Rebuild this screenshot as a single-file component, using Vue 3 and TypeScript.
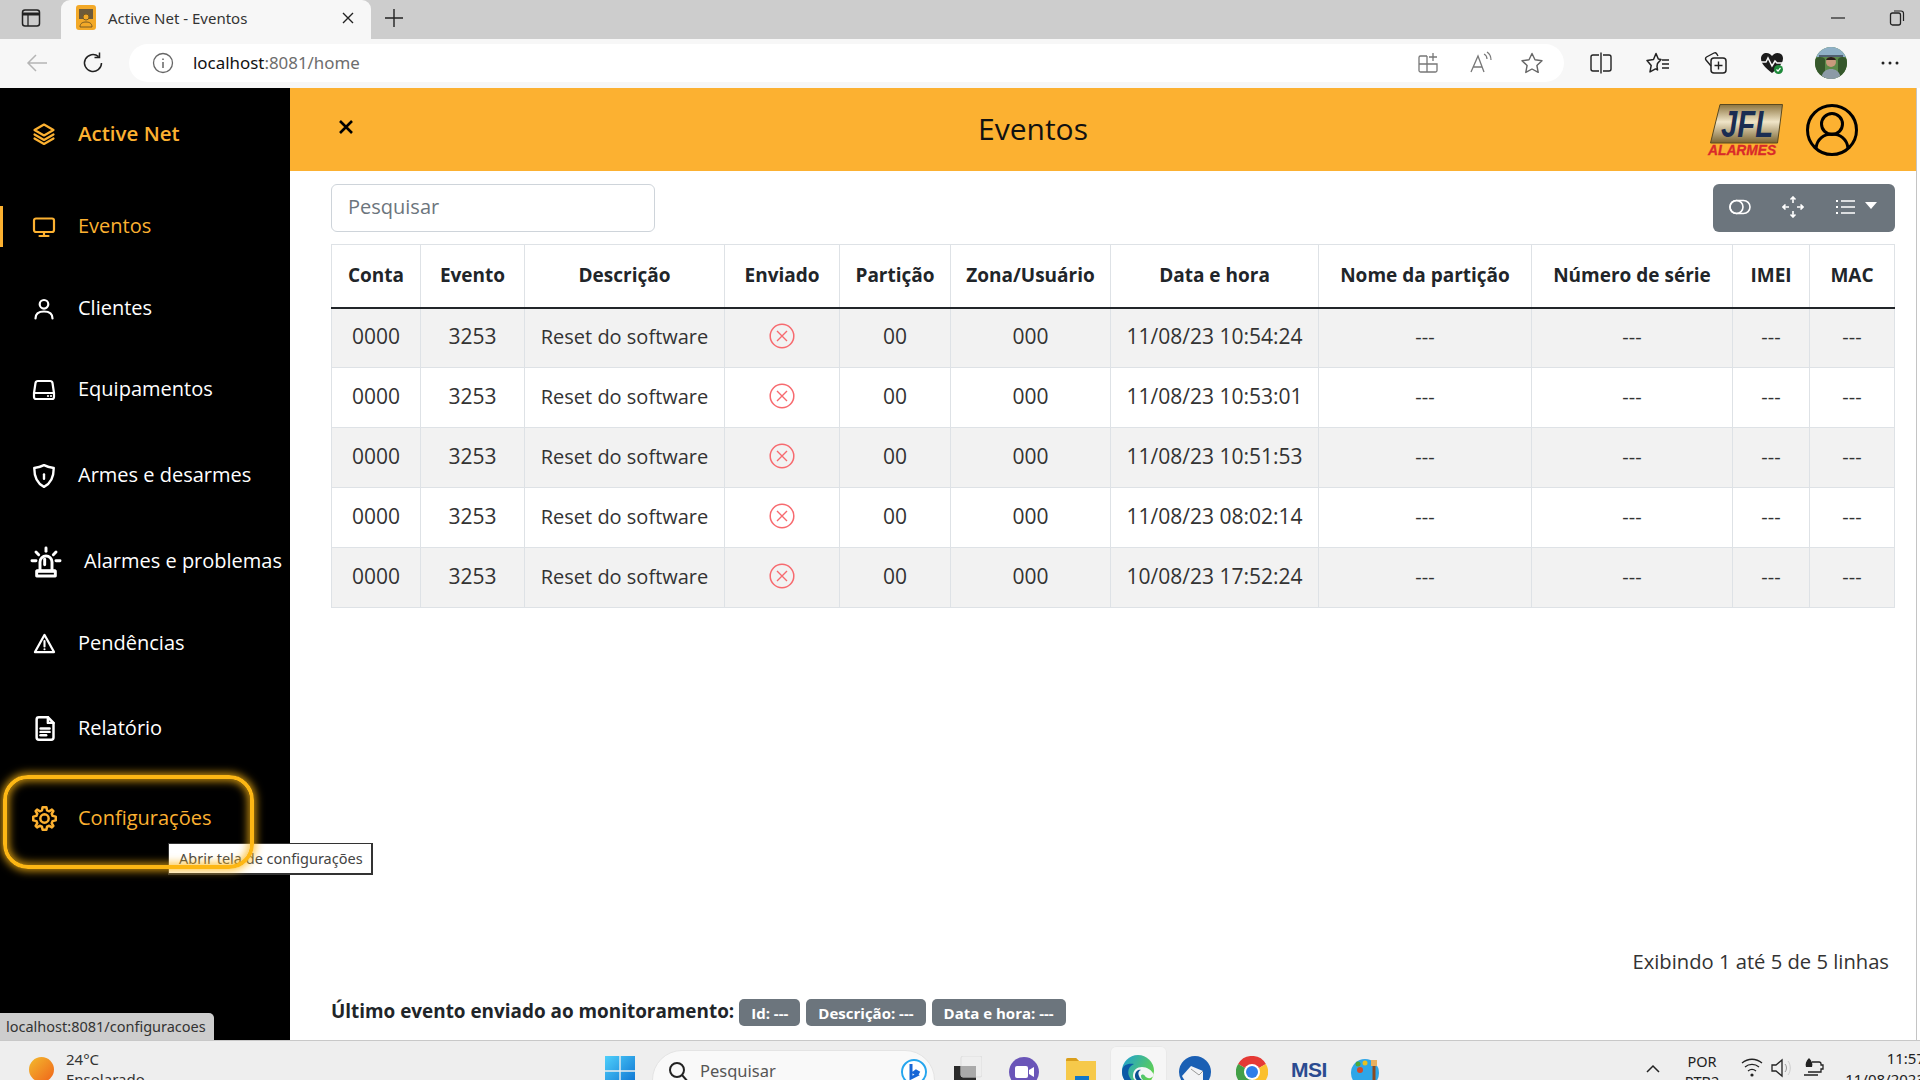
<script setup lang="ts">
interface MenuItem { label: string; paths: string[]; size: number; active?: boolean; cls: string }
const menu: MenuItem[] = [
  { label: 'Eventos', cls: 'm-eventos', size: 24, active: true, paths: ['M4 3.5h16a2 2 0 0 1 2 2V15a2 2 0 0 1-2 2H4a2 2 0 0 1-2-2V5.500a2 2 0 0 1 2-2z', 'M12 17v4', 'M7.500 21h9'] },
  { label: 'Clientes', cls: 'm-clientes', size: 24, paths: ['M12 3a4.300 4.300 0 1 0 0 8.600a4.300 4.300 0 0 0 0-8.600z', 'M3.500 21.500c0-5 3.800-7 8.500-7s8.500 2 8.500 7'] },
  { label: 'Equipamentos', cls: 'm-equip', size: 24, paths: ['M6 3h12a2.500 2.500 0 0 1 2.500 2l1.500 10v4a2 2 0 0 1-2 2H4a2 2 0 0 1-2-2v-4L3.500 5A2.500 2.500 0 0 1 6 3z', 'M2 15h20', 'M16 18h.01', 'M19 18h.01'] },
  { label: 'Armes e desarmes', cls: 'm-armes', size: 26, paths: ['M12 2c3 1.600 6 2.400 9 2.600 0 8-2 14-9 17.400-7-3.400-9-9.400-9-17.400C6 4.400 9 3.600 12 2z', 'M12 10.500v.01', 'M12 11v3.500'] },
  { label: 'Alarmes e problemas', cls: 'm-alarmes', size: 32, paths: ['M7.500 18v-6a4.500 4.500 0 0 1 9 0v6', 'M5.500 18.500h13', 'M5 19h14v3.500H5z', 'M12 1.500v2.500', 'M4.500 4.500l2 2', 'M19.500 4.500l-2 2', 'M1.500 11h3', 'M19.500 11h3', 'M11 10v4'] },
  { label: 'Pendências', cls: 'm-pend', size: 23, paths: ['M12 3L22 21H2z', 'M12 9.500v5.500', 'M12 18v.01'] },
  { label: 'Relatório', cls: 'm-rel', size: 27, paths: ['M7 2h8l5 5v13a2 2 0 0 1-2 2H7a2 2 0 0 1-2-2V4a2 2 0 0 1 2-2z', 'M15 2v5h5', 'M8.500 12h8', 'M8.500 15h8', 'M8.500 18h5'] },
  { label: 'Configurações', cls: 'm-config', size: 27, active: true, paths: ['M10.300 2H13.700L14.300 4.800L16.200 5.600L18.600 4.100L19.900 5.400L18.400 7.800L19.200 9.700L22 10.300V13.700L19.200 14.300L18.400 16.200L19.900 18.600L18.600 19.900L16.200 18.400L14.300 19.200L13.700 22H10.300L9.700 19.200L7.800 18.400L5.400 19.900L4.100 18.600L5.600 16.200L4.800 14.300L2 13.700V10.300L4.800 9.700L5.600 7.800L4.100 5.400L5.400 4.100L7.800 5.600L9.700 4.800z', 'M12 8.300a3.700 3.700 0 1 0 0 7.400a3.700 3.700 0 0 0 0-7.400z'] },
]
const columns: { title: string; width: number }[] = [
  { title: 'Conta', width: 89 }, { title: 'Evento', width: 104 }, { title: 'Descrição', width: 200 },
  { title: 'Enviado', width: 115 }, { title: 'Partição', width: 111 }, { title: 'Zona/Usuário', width: 160 },
  { title: 'Data e hora', width: 208 }, { title: 'Nome da partição', width: 213 }, { title: 'Número de série', width: 201 },
  { title: 'IMEI', width: 77 }, { title: 'MAC', width: 85 },
]
const dates = ['11/08/23 10:54:24', '11/08/23 10:53:01', '11/08/23 10:51:53', '11/08/23 08:02:14', '10/08/23 17:52:24']
</script>

<template>
  <div class="screen">
    <div class="tabstrip">
      <svg class="strip-ic" width="20" height="20" viewBox="0 0 20 20"><rect x="1.500" y="2" width="17" height="16" rx="2.500" fill="none" stroke="#222" stroke-width="1.500"/><path d="M2 6h16" stroke="#222" stroke-width="3"/><path d="M7 6v12" stroke="#222" stroke-width="1.300"/></svg>
      <div class="tab">
        <svg class="favicon" width="20" height="25" viewBox="0 0 20 25"><rect width="20" height="25" rx="3" fill="#f3a928"/><rect x="3" y="4" width="14" height="10" fill="#6d5a3a"/><circle cx="10" cy="12" r="3" fill="#f3a928" stroke="#7a5a20"/><path d="M4 22c0-4 3-5 6-5s6 1 6 5z" fill="none" stroke="#7a5a20"/></svg>
        <span class="tab-title">Active Net - Eventos</span>
        <svg width="14" height="14" viewBox="0 0 14 14" class="tab-x"><path d="M2 2l10 10M12 2L2 12" stroke="#222" stroke-width="1.400"/></svg>
      </div>
      <svg class="plus" width="20" height="20" viewBox="0 0 20 20"><path d="M10 1v18M1 10h18" stroke="#222" stroke-width="1.400"/></svg>
      <div class="winctl">
        <svg width="16" height="16" viewBox="0 0 16 16"><path d="M1 8h14" stroke="#222" stroke-width="1.200"/></svg>
        <svg width="16" height="18" viewBox="0 0 16 18"><rect x="1.500" y="4" width="10" height="12" rx="2" fill="none" stroke="#222" stroke-width="1.300"/><path d="M5 2h7a2.500 2.500 0 0 1 2.500 2.500V12" fill="none" stroke="#222" stroke-width="1.200"/></svg>
      </div>
    </div>

    <div class="toolbar">
      <span class="tb-btn first"><svg width="24" height="24" viewBox="0 0 24 24"><path d="M22 12H3M11 4l-8 8 8 8" fill="none" stroke="#b5b5b5" stroke-width="1.500"/></svg></span>
      <span class="tb-btn"><svg width="24" height="24" viewBox="0 0 24 24"><path d="M19.500 12a8.500 8.500 0 1 1-3-6.500M17.500 1.500v5h-5" fill="none" stroke="#222" stroke-width="1.500"/></svg></span>
      <div class="address">
        <svg width="22" height="22" viewBox="0 0 22 22"><circle cx="11" cy="11" r="9.500" fill="none" stroke="#666" stroke-width="1.300"/><path d="M11 10v6M11 6.500v1.600" stroke="#666" stroke-width="1.500"/></svg>
        <span class="url">localhost<span class="url-rest">:8081/home</span></span>
        <div class="addr-icons">
          <svg width="22" height="22" viewBox="0 0 22 22"><path d="M10 4H3.500A1.500 1.500 0 0 0 2 5.500v13A1.500 1.500 0 0 0 3.500 20h15a1.500 1.500 0 0 0 1.500-1.500V12H2M10 4v16" fill="none" stroke="#777" stroke-width="1.300"/><path d="M16 1v8M12 5h8" stroke="#777" stroke-width="1.300"/></svg>
          <svg width="24" height="24" viewBox="0 0 24 24"><path d="M2 21L9 5l6 16M4.500 16h9" fill="none" stroke="#777" stroke-width="1.300"/><path d="M15 3c2 1 3 3 3 5M18 1c3 2 4 5 4 8" fill="none" stroke="#777" stroke-width="1.200"/></svg>
          <svg width="24" height="24" viewBox="0 0 24 24"><path d="M12 2.500l3 6.300 7 .9-5.100 4.800 1.300 6.900-6.200-3.400-6.200 3.400 1.300-6.900L2 9.700l7-.9z" fill="none" stroke="#666" stroke-width="1.400" stroke-linejoin="round"/></svg>
        </div>
      </div>
      <div class="tb-right">
        <span class="tb-btn"><svg width="24" height="24" viewBox="0 0 24 24"><path d="M10 4H4a2 2 0 0 0-2 2v12a2 2 0 0 0 2 2h6M14 4h6a2 2 0 0 1 2 2v12a2 2 0 0 1-2 2h-6M12 1.500v21" fill="none" stroke="#222" stroke-width="1.400"/></svg></span>
        <span class="tb-btn"><svg width="24" height="24" viewBox="0 0 24 24"><path d="M10 2.500l2.300 5.500 2.700.4-3.500 4-.5 3 .5 3.500-2-1-5.500 3 1.200-6.500L1 9.500l6.500-1z" fill="none" stroke="#222" stroke-width="1.500" stroke-linejoin="round"/><path d="M16 9h7M16 13h7M16 17h7" stroke="#222" stroke-width="1.300"/></svg></span>
        <span class="tb-btn"><svg width="24" height="24" viewBox="0 0 24 24"><path d="M8 15L3 9a2 2 0 0 1 .5-3L11 2a2 2 0 0 1 2.600.6L15 5" fill="none" stroke="#222" stroke-width="1.400"/><rect x="8" y="7" width="15" height="15" rx="3" fill="none" stroke="#222" stroke-width="1.500"/><path d="M15.500 10.500v8M11.500 14.500h8" stroke="#222" stroke-width="1.400"/></svg></span>
        <span class="tb-btn"><svg width="24" height="24" viewBox="0 0 24 24"><path d="M12 22C6 17 1 13 1 7.500 1 4 3.500 2 6.500 2 9 2 11 3.500 12 5c1-1.500 3-3 5.500-3C20.500 2 23 4 23 7.500 23 13 18 17 12 22z" fill="#1c1c1c"/><path d="M0 11h6l2-4 4 8 3-5 2 2h7" fill="none" stroke="#f7f7f7" stroke-width="1.500"/><circle cx="18.500" cy="18.500" r="4.500" fill="#1f8a3b"/><path d="M16.500 18.500l1.500 1.500 2.500-3" fill="none" stroke="#fff" stroke-width="1.200"/></svg></span>
        <span class="tb-btn avatar-btn"><svg width="32" height="32" viewBox="0 0 32 32"><defs><clipPath id="avc"><circle cx="16" cy="16" r="16"/></clipPath></defs><g clip-path="url(#avc)"><rect width="32" height="32" fill="#5c8a4a"/><rect width="32" height="10" fill="#8fb0c6"/><path d="M4 9h24" stroke="#506070" stroke-width="2"/><path d="M0 12c4-3 8-2 10 0v20H0zM32 12c-4-3-7-2-9 0v20h9z" fill="#36582c"/><circle cx="16" cy="15" r="5" fill="#c99a7d"/><path d="M11 13c1-4 9-4 10 0z" fill="#2a1e18"/><path d="M6 32c1-8 6-10 10-10s9 2 10 10z" fill="#8c9aa6"/></g></svg></span>
        <span class="tb-btn dots-btn"><svg width="20" height="6" viewBox="0 0 20 6"><circle cx="3" cy="3" r="1.500" fill="#222"/><circle cx="10" cy="3" r="1.500" fill="#222"/><circle cx="17" cy="3" r="1.500" fill="#222"/></svg></span>
      </div>
    </div>

    <div class="main">
      <aside class="sidebar">
        <div class="brand">
          <svg width="24" height="24" viewBox="0 0 24 24" class="icon"><path d="M12 2.500L21.500 8 12 13.500 2.500 8z" /><path d="M2.500 12.500L12 18l9.500-5.500" /><path d="M2.500 16.500L12 22l9.500-5.500" /></svg>
          <span>Active Net</span>
        </div>
        <nav class="menu">
          <a v-for="item in menu" :key="item.label" class="item" :class="[item.cls, { active: item.active }]">
            <span class="ic-box">
              <svg :width="item.size" :height="item.size" viewBox="0 0 24 24" class="icon"><path v-for="d in item.paths" :key="d" :d="d"/></svg>
            </span>
            <span class="label">{{ item.label }}</span>
          </a>
        </nav>
      </aside>

      <section class="content">
        <header class="topbar">
          <svg class="close" width="16" height="16" viewBox="0 0 16 16"><path d="M2 2l12 12M14 2L2 14" stroke="#000" stroke-width="2.600"/></svg>
          <h1>Eventos</h1>
          <svg class="logo" width="76" height="52" viewBox="0 0 76 52">
            <defs><linearGradient id="gold" x1="0" y1="0" x2="0" y2="1"><stop offset="0" stop-color="#8c7440"/><stop offset=".45" stop-color="#f0e5c8"/><stop offset="1" stop-color="#7b6533"/></linearGradient></defs>
            <path d="M13 .5H75.500L70.500 39H3.500z" fill="url(#gold)" stroke="#5b4a20"/>
            <text x="14" y="33" textLength="52" lengthAdjust="spacingAndGlyphs" class="jfl">JFL</text>
            <text x="1" y="51" class="alarmes">ALARMES</text>
          </svg>
          <svg class="avatar" width="52" height="52" viewBox="0 0 52 52"><circle cx="26" cy="26" r="24.500" fill="none" stroke="#000" stroke-width="3"/><circle cx="26" cy="20" r="10.500" fill="none" stroke="#000" stroke-width="3"/><path d="M10 44c1-9 8-14 16-14s15 5 16 14" fill="none" stroke="#000" stroke-width="3"/></svg>
        </header>

        <div class="body">
          <div class="tools">
            <div class="search">Pesquisar</div>
            <div class="btn-group">
              <svg width="22" height="16" viewBox="0 0 22 16"><rect x="1" y="1.500" width="20" height="13" rx="6.500" fill="none" stroke="#fff" stroke-width="1.600"/><circle cx="7.500" cy="8" r="6.500" fill="none" stroke="#fff" stroke-width="1.600"/></svg>
              <svg width="22" height="22" viewBox="0 0 22 22"><path d="M11 1v6M11 15v6M1 11h6M15 11h6M8.500 3.500L11 1l2.500 2.500M8.500 18.500L11 21l2.500-2.500M3.500 8.500L1 11l2.500 2.500M18.500 8.500L21 11l-2.500 2.500" fill="none" stroke="#fff" stroke-width="1.600"/></svg>
              <span class="list-btn">
                <svg width="20" height="16" viewBox="0 0 20 16"><path d="M6 2h14M6 8h14M6 14h14" stroke="#fff" stroke-width="1.500"/><path d="M1 2h2M1 8h2M1 14h2" stroke="#fff" stroke-width="2.200"/></svg>
                <i class="caret"></i>
              </span>
            </div>
          </div>

          <table class="grid">
            <colgroup><col v-for="c in columns" :key="c.title" :style="{ width: c.width + 'px' }"></colgroup>
            <thead><tr><th v-for="c in columns" :key="c.title">{{ c.title }}</th></tr></thead>
            <tbody>
              <tr v-for="d in dates" :key="d">
                <td class="num">0000</td>
                <td class="num">3253</td>
                <td>Reset do software</td>
                <td><svg class="x-ic" width="26" height="26" viewBox="0 0 26 26"><circle cx="13" cy="13" r="11.800" fill="none" stroke="#f76a6f" stroke-width="1.500"/><path d="M8 8l10 10M18 8L8 18" stroke="#f76a6f" stroke-width="1.400"/></svg></td>
                <td class="num">00</td>
                <td class="num">000</td>
                <td class="num">{{ d }}</td>
                <td>---</td>
                <td>---</td>
                <td>---</td>
                <td>---</td>
              </tr>
            </tbody>
          </table>

          <div class="pagination">Exibindo 1 até 5 de 5 linhas</div>
          <div class="last-event">
            <strong>Último evento enviado ao monitoramento:</strong>
            <span class="badge">Id: ---</span>
            <span class="badge">Descrição: ---</span>
            <span class="badge">Data e hora: ---</span>
          </div>
        </div>
      </section>
      <div class="edge"></div>
    </div>

    <div class="taskbar">
      <div class="weather">
        <span class="sun"></span>
        <div class="w-text"><div>24°C</div><div>Ensolarado</div></div>
      </div>
      <svg class="start" width="30" height="30" viewBox="0 0 30 30"><defs><linearGradient id="win" x1="0" y1="0" x2="1" y2="1"><stop offset="0" stop-color="#4fd0fb"/><stop offset="1" stop-color="#0a6fd0"/></linearGradient></defs><path d="M0 0h14.300v14.300H0zM15.700 0H30v14.300H15.700zM0 15.700h14.300V30H0zM15.700 15.700H30V30H15.700z" fill="url(#win)"/></svg>
      <div class="tb-search">
        <svg width="22" height="24" viewBox="0 0 22 24"><circle cx="9" cy="10" r="7" fill="none" stroke="#222" stroke-width="2"/><path d="M14 15l7 8" stroke="#222" stroke-width="2"/></svg>
        <span>Pesquisar</span>
        <svg class="bing" width="26" height="30" viewBox="0 0 26 30"><circle cx="13" cy="13" r="12" fill="#fff" stroke="#25a5ee" stroke-width="2"/><path d="M10 5v14l6-3-3-2.500 2-1.500 3.500 2" fill="none" stroke="#1766d6" stroke-width="3"/></svg>
      </div>
      <div class="apps">
        <span class="app"><svg width="30" height="30" viewBox="0 0 30 30"><rect x="2" y="10" width="22" height="20" fill="#2a2a2a"/><rect x="9" y="0" width="21" height="21" rx="2" fill="#eee" stroke="#ddd"/><rect x="9" y="10" width="15" height="11" fill="#aaa"/></svg></span>
        <span class="app"><svg width="30" height="30" viewBox="0 0 30 30"><circle cx="15" cy="16" r="15" fill="#6a55b8"/><rect x="6" y="10" width="13" height="12" rx="2" fill="#fff"/><path d="M20 14l5-3v10l-5-3z" fill="#fff"/></svg></span>
        <span class="app"><svg width="32" height="30" viewBox="0 0 32 30"><path d="M1 4a2 2 0 0 1 2-2h8l3 3h17v25H1z" fill="#f6c94a"/><path d="M1 4a2 2 0 0 1 2-2h8l3 3H1z" fill="#d99e1c"/><rect x="10" y="20" width="14" height="10" fill="#1176c9"/></svg></span>
        <span class="app active"><svg width="32" height="32" viewBox="0 0 32 32"><defs><linearGradient id="edge" x1="0" y1="0" x2="1" y2=".6"><stop offset="0" stop-color="#1d9fd8"/><stop offset="1" stop-color="#62d24c"/></linearGradient></defs><circle cx="16" cy="16" r="16" fill="url(#edge)"/><path d="M0 17C0 9 7 8 12 9c-5 2-7 7-5 12 2 5 7 8 13 9-1 1-3 2-5 2C7 32 0 25 0 17z" fill="#0c5aa6"/><path d="M11 21c0-6 4-9 9-9s10 3 12 8c-2 4-7 4-9 1-1-2-4-2-4 0 0 3 3 5 6 6-6 2-14-1-14-6z" fill="#f4f6f6"/><path d="M13 21c0-4 3-7 6-6-3 1-3 4-2 6 1 3 4 5 7 6-5 1-11-1-11-6z" fill="#0a4f92"/></svg></span>
        <span class="app"><svg width="32" height="32" viewBox="0 0 32 32"><circle cx="16" cy="16" r="16" fill="#1a5fb4"/><path d="M3 20l9-10 12 5v9l-9 6c-5-1-10-5-12-10z" fill="#f2f2f5"/><path d="M12 13l8 6 4-4" fill="none" stroke="#999"/></svg></span>
        <span class="app"><svg width="32" height="32" viewBox="0 0 32 32"><path d="M16 16L29.900 8A16 16 0 0 0 2.100 8z" fill="#e53935"/><path d="M16 16L2.100 8A16 16 0 0 0 16 32z" fill="#43a047"/><path d="M16 16V32A16 16 0 0 0 29.900 8z" fill="#fbc02d"/><circle cx="16" cy="16" r="8" fill="#fff"/><circle cx="16" cy="16" r="6" fill="#2f7ee8"/></svg></span>
        <span class="app msi">MSI</span>
        <span class="app"><svg width="30" height="32" viewBox="0 0 30 32"><circle cx="14" cy="17" r="14" fill="#2ea6e8"/><circle cx="9" cy="14" r="3" fill="#d34a28"/><circle cx="14" cy="7" r="2.500" fill="#e8c020"/><circle cx="7" cy="8" r="2.500" fill="#4aa83c"/><rect x="20" y="4" width="6" height="6" fill="#e8b060"/><rect x="21.500" y="10" width="3" height="22" fill="#8a4a20"/></svg></span>
      </div>
      <div class="tray">
        <svg class="tray-caret" width="16" height="10" viewBox="0 0 16 10"><path d="M2 8l6-6 6 6" fill="none" stroke="#222" stroke-width="1.500"/></svg>
        <div class="lang"><div>POR</div><div>PTB2</div></div>
        <svg class="wifi" width="24" height="22" viewBox="0 0 24 22"><path d="M2 7c6-5 14-5 20 0M5 11c4-3.500 10-3.500 14 0M8 15c2.500-2 5.500-2 8 0" fill="none" stroke="#222" stroke-width="1.300"/><circle cx="12" cy="19" r="1.600" fill="#222"/></svg>
        <svg class="sound" width="22" height="24" viewBox="0 0 22 24"><path d="M2 9v6h4l6 5V4L6 9z" fill="none" stroke="#222" stroke-width="1.300"/><path d="M15 8c2 2 2 6 0 8" fill="none" stroke="#999"/><path d="M18 5c3 4 3 10 0 14" fill="none" stroke="#ccc"/></svg>
        <svg class="batt" width="22" height="24" viewBox="0 0 22 24"><path d="M7 3c-3 3-4 6-3 9h6c1-3 0-6-3-9z" fill="#222"/><path d="M10 7h7a2 2 0 0 1 2 2v1h2v4h-2v3H6M2 20h14" fill="none" stroke="#222" stroke-width="1.300"/></svg>
        <div class="clock"><div>11:57</div><div>11/08/2023</div></div>
      </div>
    </div>

    <div class="status">localhost:8081/configuracoes</div>
    <div class="tooltip">Abrir tela de configurações</div>
    <div class="glow"></div>
  </div>
</template>

<style>
html, body { margin: 0; background: #fff; overflow: hidden; }
</style>

<style scoped>
.screen { position: relative; width: 1920px; height: 1080px; overflow: hidden; display: flex; flex-direction: column; font-family: "Open Sans", "Noto Sans", sans-serif; color: #212529; background: #fff; }

.tabstrip { height: 39px; flex-shrink: 0; background: #cdcdcd; display: flex; align-items: flex-start; box-sizing: border-box; }
.strip-ic { margin: 8px 0 0 21px; }
.tab { margin-left: 20px; width: 310px; height: 39px; box-sizing: border-box; background: #f7f7f7; border-radius: 9px 9px 0 0; display: flex; align-items: center; padding: 0 16px 4px 15px; }
.tab-title { margin-left: 12px; flex: 1; font-family: "Noto Sans", sans-serif; font-size: 15px; color: #333; }
.plus { margin: 8px 0 0 13px; }
.winctl { margin: 9px 0 0 auto; display: flex; align-items: center; gap: 43px; padding-right: 15px; }

.toolbar { height: 49px; flex-shrink: 0; background: #f7f7f7; display: flex; align-items: center; box-sizing: border-box; padding-bottom: 2px; }
.tb-btn { width: 57px; height: 47px; display: flex; align-items: center; justify-content: center; flex-shrink: 0; }
.tb-btn.first { margin-left: 8px; }
.avatar-btn { margin-left: 2px; }
.dots-btn { margin-left: 2px; }
.address { margin-left: 7px; width: 1435px; height: 38px; box-sizing: border-box; border-radius: 19px; background: #fff; display: flex; align-items: center; padding-left: 23px; flex-shrink: 0; }
.url { margin-left: 19px; font-family: "Noto Sans", sans-serif; font-size: 16.900px; color: #111; }
.url-rest { color: #6d6d6d; }
.addr-icons { margin-left: auto; display: flex; align-items: center; padding-right: 20px; }
.addr-icons svg:first-child { margin-right: 30px; }
.addr-icons svg:nth-child(2) { margin-right: 27px; }
.tb-right { display: flex; align-items: center; margin-left: 8px; }

.main { flex: 1; display: flex; min-height: 0; }
.sidebar { width: 290px; flex-shrink: 0; background: #000; color: #fff; display: flex; flex-direction: column; }
.brand { height: 92px; display: flex; align-items: center; padding: 0 0 0 32px; color: #fcb131; font-size: 20.500px; font-weight: 600; box-sizing: border-box; }
.brand span { margin-left: 22px; margin-top: -2px; }
.icon { fill: none; stroke: currentColor; stroke-width: 2.200; stroke-linejoin: round; stroke-linecap: round; flex-shrink: 0; }
.menu { display: flex; flex-direction: column; }
.item { display: flex; align-items: center; font-size: 20px; box-sizing: border-box; }
.label { white-space: nowrap; margin-top: -2px; }
.ic-box { width: 32px; display: flex; justify-content: center; align-items: center; margin-left: 28px; margin-right: 18px; }
.active { color: #fcb131; }
.m-eventos { height: 41px; margin-top: 26px; border-left: 3px solid #fcb131; }
.m-eventos .ic-box { margin-left: 25px; }
.m-clientes { height: 41px; margin-top: 41px; }
.m-equip { height: 41px; margin-top: 40px; }
.m-armes { height: 41px; margin-top: 45px; }
.m-alarmes { height: 41px; margin-top: 45px; }
.m-alarmes .ic-box { margin-right: 22px; margin-left: 30px; }
.m-pend { height: 41px; margin-top: 41px; }
.m-rel { height: 41px; margin-top: 44px; }
.m-config { height: 41px; margin-top: 49px; }

.content { flex: 1; min-width: 0; display: flex; flex-direction: column; }
.topbar { height: 83px; flex-shrink: 0; background: #fcb131; display: flex; align-items: center; box-sizing: border-box; position: relative; }
.close { margin-left: 48px; margin-top: -5px; flex-shrink: 0; }
.topbar h1 { flex: 1; margin: 0; padding: 0 0 2px 624px; text-align: left; font-size: 30px; font-weight: 400; color: #111; }
.logo { flex-shrink: 0; margin-right: 23px; overflow: visible; }
.jfl { font: italic 700 37px "Liberation Sans", sans-serif; fill: #1b2d52; }
.alarmes { font: italic 700 13.800px "Liberation Sans", sans-serif; fill: #d92a2a; stroke: #d92a2a; stroke-width: .3px; }
.avatar { flex-shrink: 0; margin-right: 58px; }

.body { flex: 1; display: flex; flex-direction: column; padding: 13px 21px 0 41px; min-height: 0; }
.tools { display: flex; justify-content: space-between; height: 48px; flex-shrink: 0; margin-bottom: 12px; }
.search { width: 324px; box-sizing: border-box; border: 1px solid #ced4da; border-radius: 6px; display: flex; align-items: center; padding: 0 0 3px 16px; font-size: 20px; color: #6c757d; background: #fff; }
.btn-group { width: 182px; background: #6c757d; border-radius: 6px; display: flex; align-items: center; box-sizing: border-box; padding: 0 0 3px 16px; gap: 31px; }
.list-btn { display: flex; align-items: center; gap: 10px; }
.caret { width: 0; height: 0; border-left: 6px solid transparent; border-right: 6px solid transparent; border-top: 7px solid #fff; margin-top: -3px; }

.grid { width: 1563px; border-collapse: collapse; table-layout: fixed; font-size: 20px; flex-shrink: 0; }
.grid th, .grid td { border: 1px solid #dee2e6; text-align: center; white-space: nowrap; }
.grid th { height: 63px; padding: 0 0 2px; font-weight: 700; font-size: 19px; border-bottom: 2px solid #212529; color: #212529; box-sizing: border-box; }
.grid td { height: 60px; padding: 0 0 3px; color: #333; box-sizing: border-box; }
.grid td.num { font-size: 21px; }
.grid tbody tr:nth-child(odd) td { background: #f2f2f2; }
.x-ic { display: block; margin: 0 auto; }

.pagination { margin-top: auto; text-align: right; padding-right: 6px; font-size: 20.200px; line-height: 30px; color: #333; }
.last-event { display: flex; align-items: center; margin-top: 23.500px; height: 27px; margin-bottom: 14px; font-size: 18.900px; color: #212529; }
.last-event strong { font-weight: 700; margin: -3px 5px 0 0; }
.badge { height: 27px; box-sizing: border-box; display: flex; align-items: center; padding: 0 12px; background: #6c757d; color: #fff; border-radius: 5px; font-size: 15px; font-weight: 700; margin-right: 6px; }

.edge { width: 4px; flex-shrink: 0; box-sizing: border-box; border-left: 1px solid #c4c4c4; background: #fff; }

.taskbar { height: 40px; flex-shrink: 0; background: #eeeeee; border-top: 1px solid #c8c8c8; box-sizing: border-box; display: flex; align-items: flex-start; overflow: hidden; position: relative; }
.weather { width: 605px; flex-shrink: 0; display: flex; padding-left: 29px; box-sizing: border-box; }
.sun { width: 25px; height: 25px; border-radius: 50%; margin-top: 16px; background: linear-gradient(135deg, #f3bb2e, #f0631a); }
.w-text { margin-left: 12px; font-family: "Noto Sans", sans-serif; font-size: 15px; line-height: 20px; color: #333; padding-top: 8px; }
.start { margin-top: 15px; flex-shrink: 0; }
.tb-search { margin-left: 17px; margin-top: 9px; width: 283px; height: 60px; flex-shrink: 0; border-radius: 30px; background: #f9f9f9; border: 1px solid #e4e4e4; box-sizing: border-box; display: flex; align-items: flex-start; padding: 9px 0 0 15px; font-family: "Noto Sans", sans-serif; font-size: 16.500px; color: #555; }
.tb-search span { margin-left: 10px; margin-top: -1px; }
.bing { margin-left: auto; margin-right: 7px; margin-top: -1px; }
.apps { display: flex; margin-left: 3.500px; flex-shrink: 0; }
.app { width: 57px; height: 60px; display: flex; justify-content: center; align-items: flex-start; padding-top: 15px; box-sizing: border-box; flex-shrink: 0; }
.app.active { background: #f6f6f6; border-radius: 6px 6px 0 0; margin-top: 5px; padding-top: 9px; height: 60px; box-shadow: inset 0 0 0 1px #e9e9e9; }
.msi { font: 900 21px "Liberation Sans", sans-serif; color: #2a4a90; padding-top: 17px; letter-spacing: -0.500px; }
.tray { display: flex; align-items: flex-start; margin-left: 250.500px; flex-shrink: 0; font-family: "Noto Sans", sans-serif; color: #222; }
.tray-caret { margin-top: 23px; flex-shrink: 0; }
.lang { margin-left: 15px; width: 52px; text-align: center; font-size: 14.500px; line-height: 20px; padding-top: 10px; }
.wifi { margin-left: 12px; margin-top: 15px; flex-shrink: 0; }
.sound { margin-left: 6px; margin-top: 15px; flex-shrink: 0; }
.batt { margin-left: 10px; margin-top: 14px; flex-shrink: 0; }
.clock { margin-left: 16px; width: 85px; text-align: right; font-size: 15px; line-height: 21px; padding-top: 7px; white-space: nowrap; }

.status { position: absolute; left: 0; top: 1013px; width: 214px; height: 27px; box-sizing: border-box; background: #cdcdcd; border-radius: 0 5px 0 0; padding-left: 6px; line-height: 27px; font-family: "Noto Sans", sans-serif; font-size: 14.500px; color: #333; white-space: nowrap; }
.tooltip { position: absolute; left: 168px; top: 843px; width: 205px; height: 32px; box-sizing: border-box; background: #fff; border: 1px solid #333; border-right-width: 2px; border-bottom-width: 2px; padding-left: 10px; line-height: 29px; font-family: "Noto Sans", sans-serif; font-size: 14.500px; color: #444; white-space: nowrap; }
.glow { position: absolute; left: 3px; top: 775px; width: 251px; height: 94px; box-sizing: border-box; border: 4px solid #fdb714; border-radius: 25px; box-shadow: 0 0 8px 2px rgba(253, 183, 20, 0.800), inset 0 0 8px 2px rgba(253, 183, 20, 0.800); pointer-events: none; }
</style>
